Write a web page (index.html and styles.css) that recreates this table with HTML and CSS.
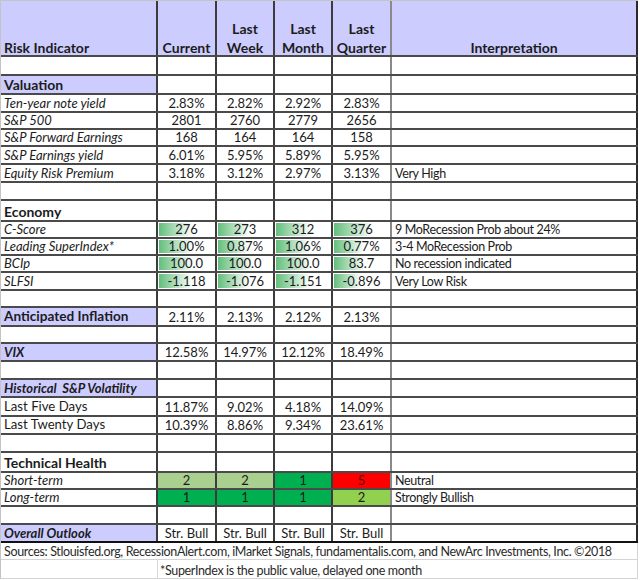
FILE: index.html
```html
<!DOCTYPE html>
<html>
<head>
<meta charset="utf-8">
<link rel="stylesheet" href="styles.css">
</head>
<body>
<div class="sheet">
  <div class="row h-head head">
    <div class="c lab hdr"><span>Risk Indicator</span></div>
    <div class="c num hdr"><span>Current</span></div>
    <div class="c num hdr"><span>Last<br>Week</span></div>
    <div class="c num hdr"><span>Last<br>Month</span></div>
    <div class="c num hdr q"><span>Last<br>Quarter</span></div>
    <div class="c num hdr"><span>Interpretation</span></div>
  </div>
  <div class="row h19"><div class="c lab"></div><div class="c"></div><div class="c"></div><div class="c"></div><div class="c q"></div><div class="c"></div></div>
  <div class="row h19"><div class="c lab sec lav">Valuation</div><div class="c"></div><div class="c"></div><div class="c"></div><div class="c q"></div><div class="c"></div></div>
  <div class="row h18"><div class="c lab it">Ten-year note yield</div><div class="c num">2.83%</div><div class="c num">2.82%</div><div class="c num">2.92%</div><div class="c num q">2.83%</div><div class="c txt"></div></div>
  <div class="row h17"><div class="c lab it">S&amp;P 500</div><div class="c num">2801</div><div class="c num">2760</div><div class="c num">2779</div><div class="c num q">2656</div><div class="c txt"></div></div>
  <div class="row h17"><div class="c lab it">S&amp;P Forward Earnings</div><div class="c num">168</div><div class="c num">164</div><div class="c num">164</div><div class="c num q">158</div><div class="c txt"></div></div>
  <div class="row h18"><div class="c lab it">S&amp;P Earnings yield</div><div class="c num">6.01%</div><div class="c num">5.95%</div><div class="c num">5.89%</div><div class="c num q">5.95%</div><div class="c txt"></div></div>
  <div class="row h18"><div class="c lab it">Equity Risk Premium</div><div class="c num">3.18%</div><div class="c num">3.12%</div><div class="c num">2.97%</div><div class="c num q">3.13%</div><div class="c txt">Very High</div></div>
  <div class="row h18"><div class="c lab"></div><div class="c"></div><div class="c"></div><div class="c"></div><div class="c q"></div><div class="c"></div></div>
  <div class="row h21"><div class="c lab sec">Economy</div><div class="c"></div><div class="c"></div><div class="c"></div><div class="c q"></div><div class="c"></div></div>
  <div class="row h17"><div class="c lab it">C-Score</div><div class="c num bar"><i class="db" style="width:58%"></i><span>276</span></div><div class="c num bar"><i class="db" style="width:57%"></i><span>273</span></div><div class="c num bar"><i class="db" style="width:62%"></i><span>312</span></div><div class="c num bar q"><i class="db" style="width:68%"></i><span>376</span></div><div class="c txt">9 MoRecession Prob about 24%</div></div>
  <div class="row h17"><div class="c lab it">Leading SuperIndex*</div><div class="c num bar"><i class="db" style="width:60%"></i><span>1.00%</span></div><div class="c num bar"><i class="db" style="width:55%"></i><span>0.87%</span></div><div class="c num bar"><i class="db" style="width:60%"></i><span>1.06%</span></div><div class="c num bar q"><i class="db" style="width:52%"></i><span>0.77%</span></div><div class="c txt">3-4 MoRecession Prob</div></div>
  <div class="row h17"><div class="c lab it">BCIp</div><div class="c num bar"><i class="db" style="width:62%"></i><span>100.0</span></div><div class="c num bar"><i class="db" style="width:62%"></i><span>100.0</span></div><div class="c num bar"><i class="db" style="width:62%"></i><span>100.0</span></div><div class="c num bar q"><i class="db" style="width:55%"></i><span>83.7</span></div><div class="c txt">No recession indicated</div></div>
  <div class="row h18"><div class="c lab it">SLFSI</div><div class="c num bar"><i class="db" style="width:58%"></i><span>-1.118</span></div><div class="c num bar"><i class="db" style="width:55%"></i><span>-1.076</span></div><div class="c num bar"><i class="db" style="width:60%"></i><span>-1.151</span></div><div class="c num bar q"><i class="db" style="width:48%"></i><span>-0.896</span></div><div class="c txt">Very Low Risk</div></div>
  <div class="row h17"><div class="c lab"></div><div class="c"></div><div class="c"></div><div class="c"></div><div class="c q"></div><div class="c"></div></div>
  <div class="row h19"><div class="c lab sec big lav">Anticipated Inflation</div><div class="c num">2.11%</div><div class="c num">2.13%</div><div class="c num">2.12%</div><div class="c num q">2.13%</div><div class="c"></div></div>
  <div class="row h17"><div class="c lab"></div><div class="c"></div><div class="c"></div><div class="c"></div><div class="c q"></div><div class="c"></div></div>
  <div class="row h18"><div class="c lab bi lav">VIX</div><div class="c num">12.58%</div><div class="c num">14.97%</div><div class="c num">12.12%</div><div class="c num q">18.49%</div><div class="c"></div></div>
  <div class="row h18"><div class="c lab"></div><div class="c"></div><div class="c"></div><div class="c"></div><div class="c q"></div><div class="c"></div></div>
  <div class="row h18"><div class="c lab bi lav">Historical &nbsp;S&amp;P Volatility</div><div class="c"></div><div class="c"></div><div class="c"></div><div class="c q"></div><div class="c"></div></div>
  <div class="row h19"><div class="c lab reg">Last Five Days</div><div class="c num">11.87%</div><div class="c num">9.02%</div><div class="c num">4.18%</div><div class="c num q">14.09%</div><div class="c"></div></div>
  <div class="row h18"><div class="c lab reg">Last Twenty Days</div><div class="c num">10.39%</div><div class="c num">8.86%</div><div class="c num">9.34%</div><div class="c num q">23.61%</div><div class="c"></div></div>
  <div class="row h18"><div class="c lab"></div><div class="c"></div><div class="c"></div><div class="c"></div><div class="c q"></div><div class="c"></div></div>
  <div class="row h20"><div class="c lab sec">Technical Health</div><div class="c"></div><div class="c"></div><div class="c"></div><div class="c q"></div><div class="c"></div></div>
  <div class="row h17"><div class="c lab it">Short-term</div><div class="c num g2">2</div><div class="c num g2">2</div><div class="c num g1">1</div><div class="c num q r5">5</div><div class="c txt">Neutral</div></div>
  <div class="row h17"><div class="c lab it">Long-term</div><div class="c num g1">1</div><div class="c num g1">1</div><div class="c num g1">1</div><div class="c num q lg">2</div><div class="c txt">Strongly Bullish</div></div>
  <div class="row h18"><div class="c lab"></div><div class="c"></div><div class="c"></div><div class="c"></div><div class="c q"></div><div class="c"></div></div>
  <div class="row h18 last"><div class="c lab bi lav">Overall Outlook</div><div class="c num">Str. Bull</div><div class="c num">Str. Bull</div><div class="c num">Str. Bull</div><div class="c num q">Str. Bull</div><div class="c"></div></div>
  <div class="foot h17"><div class="f full">Sources: Stlouisfed.org, RecessionAlert.com, iMarket Signals, fundamentalis.com, and NewArc Investments, Inc. ©2018</div></div>
  <div class="foot h19 two"><div class="f"></div><div class="f">*SuperIndex is the public value, delayed one month</div></div>
</div>
</body>
</html>
```

FILE: styles.css
```css
* { box-sizing: border-box; }
html, body { margin: 0; padding: 0; background: #fff; }
body { font-family: Lato, "Open Sans", sans-serif; color: #1c1c1c; }

.sheet {
  width: 638px;
  border-top: 1px solid #c4c4c4;
  border-left: 1px solid #c4c4c4;
}

.row {
  display: grid;
  grid-template-columns: 157px 59px 58px 58px 59px 246px;
  border-bottom: 2px solid #4a4a4a;
}
.row.last { border-bottom: 2px solid #111; }
.head { background: #ccccff; height: 56px; }
.h17 { height: 17px; }
.h18 { height: 18px; }
.h19 { height: 19px; }
.h20 { height: 20px; }
.h21 { height: 21px; }

.c {
  position: relative;
  border-right: 2px solid #3c3c3c;
  display: flex;
  align-items: flex-end;
  font-size: 13px;
  line-height: 15px;
  white-space: nowrap;
  overflow: hidden;
}
.c.q { border-right-color: #8a8a8a; }
.row > .c:last-child { border-right: 2px solid #2a2a2a; }

.lab { padding-left: 3px; }
.lav { background: #ccccff; }
.it { font-style: italic; }
.bi { font-style: italic; font-weight: 700; }
.reg { font-size: 13.2px; line-height: 17px; }
.sec { font-weight: 700; font-size: 14px; line-height: 17px; }
.sec.big { font-size: 13.6px; }

.num { justify-content: center; text-align: center; }
.txt { padding-left: 3px; font-size: 12.5px; letter-spacing: -0.35px; }

.c.hdr {
  font-weight: 700;
  font-size: 14px;
  line-height: 19px;
  overflow: visible;
  padding-bottom: 0;
}
.hdr span { position: relative; top: 2px; }
.hdr.lab { padding-left: 3px; }

.bar .db {
  position: absolute;
  left: 1px;
  top: 1px;
  bottom: 1px;
  background: linear-gradient(to right, #63be7b, #ffffff);
}
.bar span { position: relative; }

.g1 { background: #00b050; }
.g2 { background: #a9d08e; }
.lg { background: #92d050; }
.r5 { background: #ff0000; color: #5a0000; }

.foot {
  display: grid;
  grid-template-columns: 1fr;
  border-bottom: 1px solid #d4d4d4;
  border-right: 1px solid #d4d4d4;
}
.foot.two { grid-template-columns: 157px 1fr; }
.f {
  font-size: 12.5px;
  letter-spacing: -0.35px;
  line-height: 15px;
  color: #2a2a2a;
  display: flex;
  align-items: flex-end;
  padding-left: 2px;
  white-space: nowrap;
}
.foot.two .f:first-child { border-right: 1px solid #d8d8d8; }
.f.full { padding-left: 3px; }
```
